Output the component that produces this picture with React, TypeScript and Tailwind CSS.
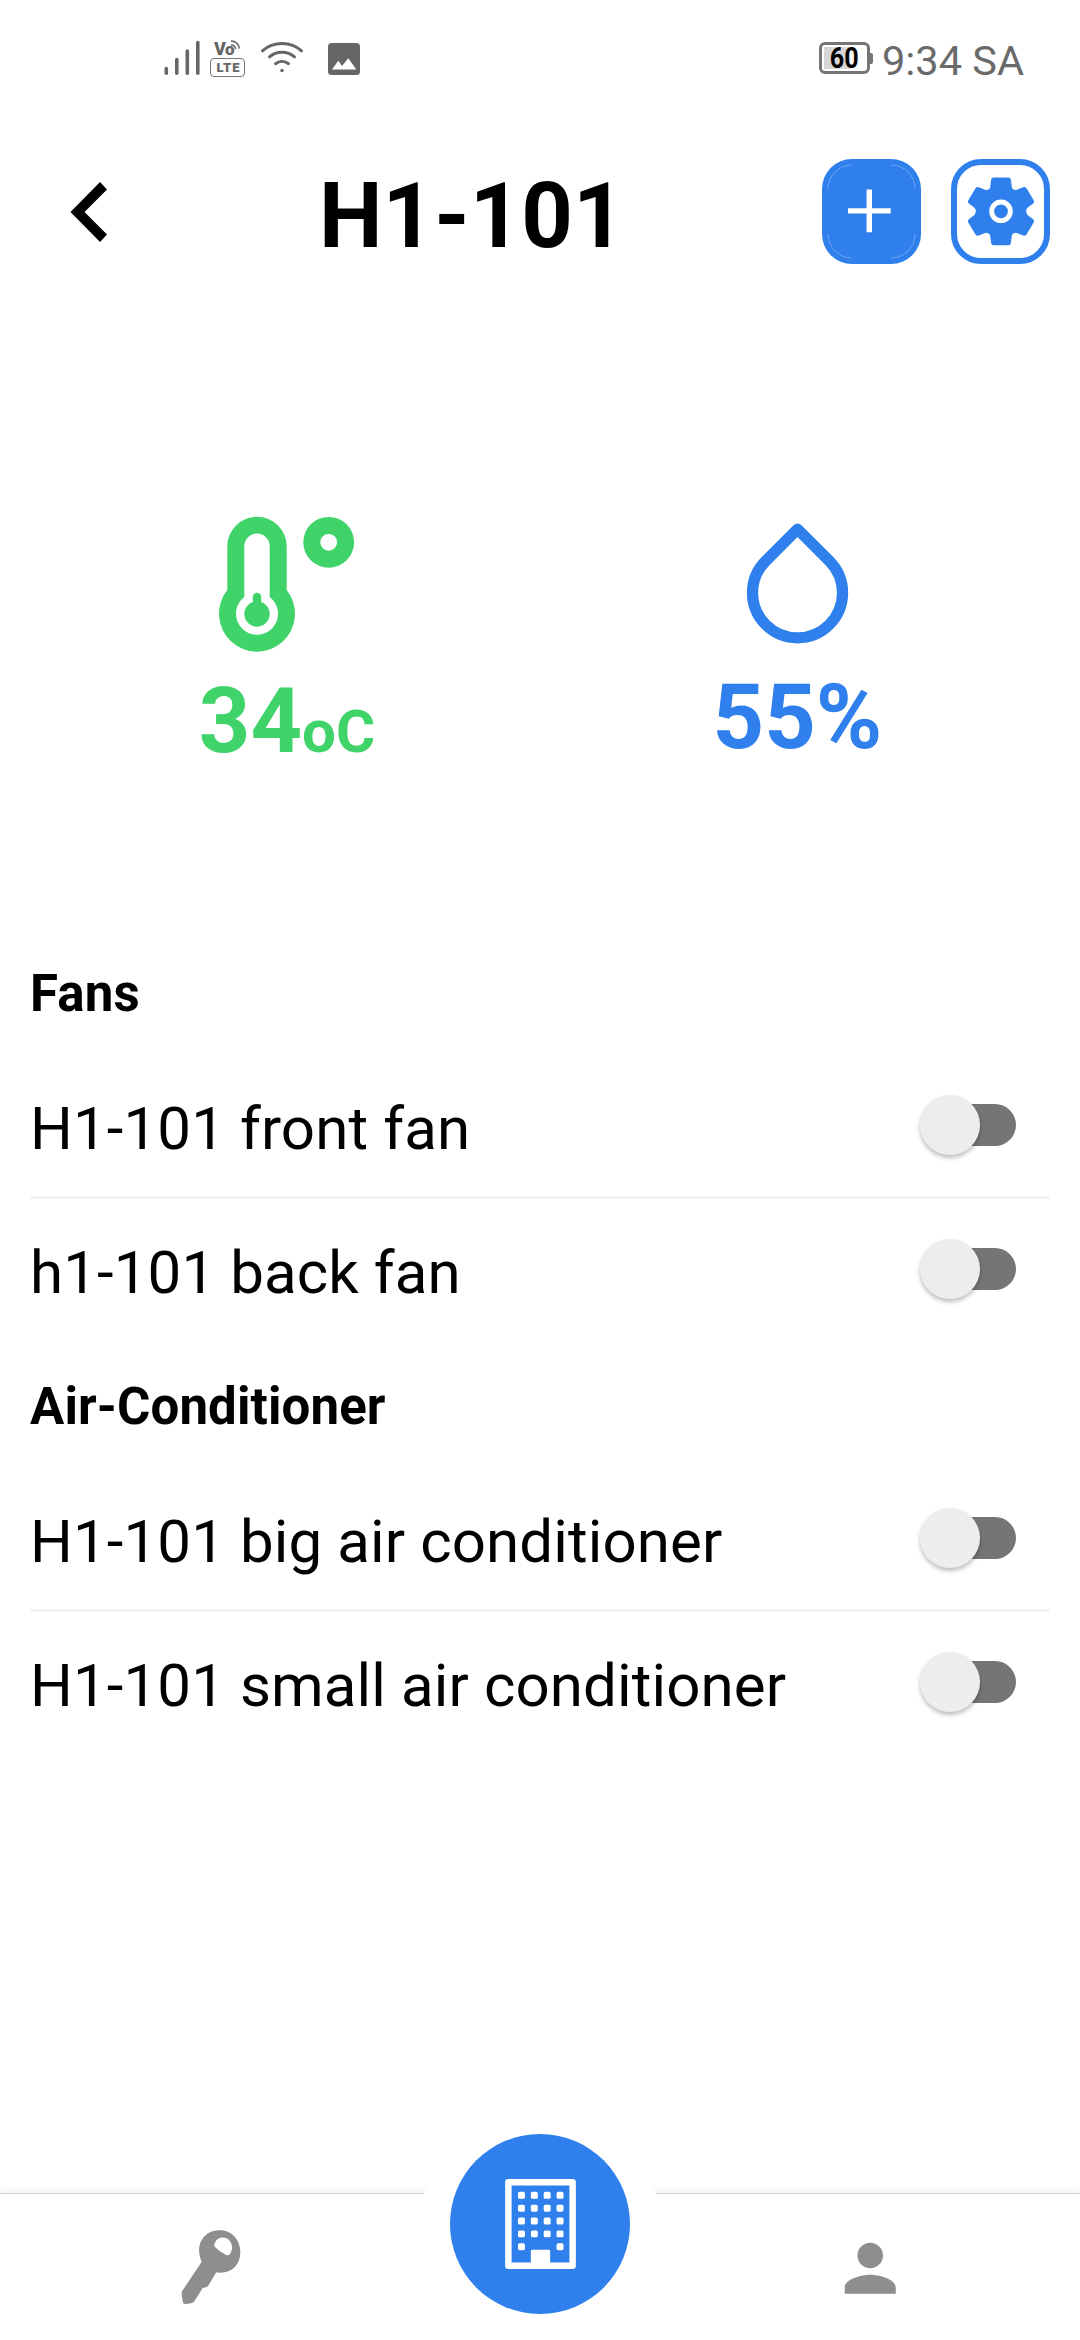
import React from "react";
import { MdPerson } from "react-icons/md";

const groups = [
  { title: "Fans", devices: ["H1-101 front fan", "h1-101 back fan"] },
  {
    title: "Air-Conditioner",
    devices: ["H1-101 big air conditioner", "H1-101 small air conditioner"],
  },
];

function SignalIcon() {
  return (
    <svg className="h-9 w-[36px]" viewBox="0 0 36 36" stroke="#666" strokeWidth="3.6" strokeLinecap="round">
      <path d="M2.3 28.5v4.7M12.8 19.6v13.6M23.3 11v22.2M33.8 2.5v30.7" />
    </svg>
  );
}

function VolteIcon() {
  return (
    <div className="relative h-[37px] w-[35px] font-black text-[#666]">
      <div className="flex h-[18px] items-end pl-[4px]">
        <span className="text-[18px] leading-[18px]">V</span>
        <span className="-ml-px text-[17px] leading-[18px]">o</span>
      </div>
      <svg className="absolute top-0 left-[20px] h-[10px] w-[12px]" viewBox="0 0 12 10" fill="none" stroke="#666" strokeWidth="1.7">
        <path d="M1 1.2C5.5 1 8.8 4 9.3 8.5M1 5C3.6 4.900 5.2 6.5 5.6 9" />
      </svg>
      <div className="flex h-[19px] items-center justify-center rounded-[4px] border-[1.5px] border-[#777] pl-[2px] text-[13px] leading-none tracking-[1px]">
        LTE
      </div>
    </div>
  );
}

function WifiIcon() {
  return (
    <svg className="h-9 w-[44px]" viewBox="0 0 44 36" fill="none" stroke="#666" strokeWidth="3" strokeLinecap="round">
      <path d="M2.5 10.8C13 1 31 1 41.5 10.8M9.5 16.8C16.5 10.6 27.5 10.6 34.5 16.8M15.5 23.7C19.4 20.7 24.6 20.7 28.5 23.7" />
      <circle cx="22" cy="30.5" r="1.7" fill="#666" stroke="none" />
    </svg>
  );
}

function PictureIcon() {
  return (
    <svg className="h-8 w-8" viewBox="0 0 32 32">
      <rect width="32" height="32" rx="3.5" fill="#666" />
      <path d="M4 26.5L10.3 17.8L14 23L20.3 15.3L28.3 26.5Z" fill="#fff" />
    </svg>
  );
}

function Battery() {
  return (
    <div className="flex h-8 items-center">
      <div className="relative flex h-8 w-[51px] items-center justify-center rounded-[6px] border-[3px] border-[#757575]">
        <div className="absolute top-[2px] left-[2px] h-[22px] w-[26px] bg-[#d6d6d6]" />
        <span className="relative scale-x-[.84] text-[30px] leading-[30px] font-bold text-black">60</span>
      </div>
      <div className="h-[11px] w-[3px] rounded-r-[2px] bg-[#757575]" />
    </div>
  );
}

function StatusBar() {
  return (
    <header className="flex h-[159px] items-start pr-[56px] pl-[164px]">
      <div className="mt-[40px] flex">
        <SignalIcon />
        <div className="w-[10px]" />
        <VolteIcon />
        <div className="w-[15px]" />
        <WifiIcon />
        <div className="mt-[3px] ml-[24px]">
          <PictureIcon />
        </div>
      </div>
      <div className="mt-[42px] ml-auto flex">
        <Battery />
        <span className="ml-[9px] text-[41.5px] leading-[37px] whitespace-nowrap text-[#6a6a6a]">9:34 SA</span>
      </div>
    </header>
  );
}

function GearIcon() {
  return (
    <svg className="h-[70px] w-[68px] shrink-0" viewBox="499.5 109.5 204 210" fill="#2f80ed">
      <path d="M579 111H624Q630 111 631 117L634 140Q635 145 640 147Q645 150 651 147L668 140Q674 138 678 143L700 180Q702 185 698 189L682 201Q677 205 677 212Q677 219 682 224L698 236Q702 240 700 245L678 282Q674 287 668 285L651 278Q645 275 640 278Q635 280 634 285L631 308Q630 314 624 314H579Q573 314 572 308L569 285Q568 280 563 278Q558 275 552 278L535 285Q529 287 525 282L503 245Q501 240 505 236L521 224Q526 219 526 212Q526 205 521 201L505 189Q501 185 503 180L525 143Q529 138 535 140L552 147Q558 150 563 147Q568 145 569 140L572 117Q573 111 579 111Z" />
      <circle cx="601.5" cy="212.5" r="28" fill="none" stroke="#fff" strokeWidth="14.5" />
    </svg>
  );
}

function TitleBar() {
  return (
    <div className="flex h-[105px] items-center pr-[30px] pl-[70px]">
      <svg className="h-[60px] w-[37px]" viewBox="0 0 37 60">
        <path d="M30 0L37 7.5L14.5 30L37 52.5L30 60L0.5 30Z" fill="#000" />
      </svg>
      <h1 className="ml-[212px] pt-[9px] text-[90px] leading-[105px] font-bold">H1-101</h1>
      <div className="ml-auto flex gap-[30px]">
        <button className="h-[105px] w-[99px] rounded-[30px] bg-[#2f80ed]">
          <svg className="h-[105px] w-[99px]" viewBox="0 0 99 105" fill="none" stroke="#fff">
            <path strokeWidth="5.4" d="M47.3 30.5V73.3M26 51.9H68.7" />
            <path
              strokeWidth=".7"
              strokeOpacity=".4"
              d="M6 30A24 24 0 0 1 30 6M69 6A24 24 0 0 1 93 30M93 75A24 24 0 0 1 69 99M30 99A24 24 0 0 1 6 75"
            />
          </svg>
        </button>
        <button className="flex h-[105px] w-[99px] items-center justify-center rounded-[30px] border-[6px] border-[#2f80ed]">
          <GearIcon />
        </button>
      </div>
    </div>
  );
}

function ThermometerIcon() {
  return (
    <svg className="h-[136px] w-[136px]" viewBox="219 516 136 136" fill="#40d36a" fillRule="evenodd">
      <path d="M227.3 590V546.4A29.7 29.7 0 0 1 286.7 546.4V590A38 38 0 1 1 227.3 590ZM244.3 597V546.2A12.7 12.7 0 0 1 269.7 546.2V597A21 21 0 1 1 244.3 597Z" />
      <path d="M252.8 602V597A4.2 4.2 0 0 1 261.2 597V602A12.7 12.7 0 1 1 252.8 602Z" />
      <path d="M303.3 542.3a25.4 25.4 0 1 0 50.8 0a25.4 25.4 0 1 0 -50.8 0ZM320.3 542.3a8.4 8.4 0 1 0 16.8 0a8.4 8.4 0 1 0 -16.8 0Z" />
    </svg>
  );
}

function Readings() {
  return (
    <section className="flex h-[663px] pt-[250px] font-bold">
      <div className="flex w-[574px] flex-col items-center pt-[2px] text-[#40d36a]">
        <ThermometerIcon />
        <p className="mt-[17px] text-[90px] leading-[105px]">
          34<span className="text-[60px]">oC</span>
        </p>
      </div>
      <div className="flex w-[447px] flex-col items-center text-[#2f80ed]">
        <svg className="h-[135px] w-[135px]" viewBox="0 0 24 24" fill="none" stroke="currentColor" strokeWidth="2" strokeLinecap="round" strokeLinejoin="round">
          <path d="M12 2.69l5.66 5.66a8 8 0 1 1-11.31 0z" />
        </svg>
        <p className="mt-[16px] text-[90px] leading-[105px]">55%</p>
      </div>
    </section>
  );
}

function Toggle() {
  return (
    <button className="flex h-[60px] w-[96px] items-center">
      <span className="z-10 h-[60px] w-[60px] rounded-full bg-[#ededed] shadow-[0_3px_4px_rgba(0,0,0,0.25)]" />
      <span className="-ml-[45px] h-[42px] w-[81px] rounded-full bg-[#757577]" />
    </button>
  );
}

function DeviceGroup({ title, devices }: { title: string; devices: string[] }) {
  return (
    <section className="h-[413px] px-[30px] tracking-[0.12px]">
      <h2 className="h-[128px] text-[51px] leading-[133px] font-bold">{title}</h2>
      <ul className="divide-y-[3px] divide-[#f7f3f4]">
        {devices.map((name) => (
          <li key={name} className="flex h-[144px] items-start justify-between pr-[34px] last:h-[141px]">
            <span className="text-[60px] leading-[147px]">{name}</span>
            <span className="flex h-[140px] items-center">
              <Toggle />
            </span>
          </li>
        ))}
      </ul>
    </section>
  );
}

function BuildingIcon() {
  const windows = [2, 4, 6, 8, 10].flatMap((y) =>
    [2, 4, 6, 8].filter((x) => y < 10 || x === 2 || x === 8).map((x) => ({ x, y })),
  );
  return (
    <svg className="h-[90px] w-[71px]" viewBox="0 0 11 14" fill="#fff">
      <path fillRule="evenodd" d="M.5 0H10.5A.5.5 0 0 1 11 .5V13.5A.5.5 0 0 1 10.5 14H.5A.5.5 0 0 1 0 13.5V.5A.5.5 0 0 1 .5 0ZM1 1V13H10V1Z" />
      <path d="M4 13.2V11.25A.25.25 0 0 1 4.25 11H6.75A.25.25 0 0 1 7 11.25V13.2Z" />
      {windows.map(({ x, y }) => (
        <rect key={`${x}-${y}`} x={x} y={y} width="1.08" height="1.08" rx=".25" />
      ))}
    </svg>
  );
}

function KeyIcon() {
  return (
    <svg className="h-[75px] w-[60px]" viewBox="92 149 180 225" fill="#8e8e8e">
      <path
        fillRule="evenodd"
        d="M208 150C246 150 270 181 270 215C270 257 241 282 198 276L173 317Q171 320 167 321L157 323L133 361Q130 366 125 368Q113 371 103 371Q99 371 98 366Q94 350 94 338Q94 334 97 330L154 244C132 194 160 150 208 150ZM194 187C202 169 226 167 238 181C249 194 246 213 238 222Q233 227 226 223Q206 213 194 200Q189 195 194 187Z"
      />
    </svg>
  );
}

function TabBar() {
  return (
    <nav className="relative mt-auto grid h-[147px] grid-cols-2 border-t border-[#d0d0d0] bg-white shadow-[0_-2px_8px_rgba(0,0,0,0.07)]">
      <button className="flex items-start pt-[36px] pl-[180.5px]">
        <KeyIcon />
      </button>
      <button className="flex items-start pt-[36px] pl-[292px]">
        <MdPerson className="h-[76.5px] w-[76.5px] text-[#8e8e8e]" />
      </button>
      <button className="absolute -top-[90px] left-[420px] flex h-[240px] w-[240px] items-center justify-center rounded-full bg-white">
        <span className="flex h-[180px] w-[180px] items-center justify-center rounded-full bg-[#2f80ed]">
          <BuildingIcon />
        </span>
      </button>
    </nav>
  );
}

export default function App() {
  return (
    <main className="flex h-[2340px] w-[1080px] flex-col overflow-hidden bg-white font-[Roboto,sans-serif] text-black">
      <StatusBar />
      <TitleBar />
      <Readings />
      {groups.map((group) => (
        <DeviceGroup key={group.title} {...group} />
      ))}
      <TabBar />
    </main>
  );
}
